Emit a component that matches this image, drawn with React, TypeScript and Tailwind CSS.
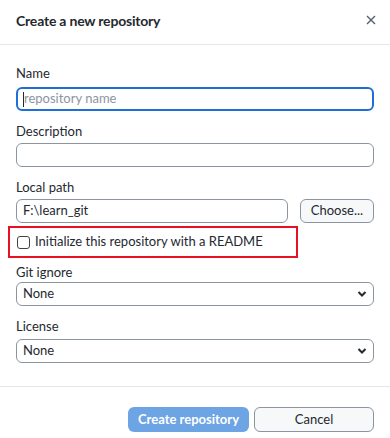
import React from "react";

const font = { fontFamily: 'Lato, "Noto Sans", sans-serif' };

function Label({ children }: { children: React.ReactNode }) {
  return <div className="h-5 text-[13px] leading-5 text-[#24292f]">{children}</div>;
}

function Box({ children, className = "" }: { children?: React.ReactNode; className?: string }) {
  return (
    <div
      className={
        "h-6 flex items-center rounded-[6px] border border-[#8c959f] px-[6px] text-[13px] text-[#24292f] " +
        className
      }
    >
      {children}
    </div>
  );
}

function Chevron() {
  return (
    <svg width="10" height="8" viewBox="0 0 10 8" className="ml-auto">
      <path d="M1.5 2 L5 5.5 L8.5 2" fill="none" stroke="#24292f" strokeWidth="2" />
    </svg>
  );
}

export default function App() {
  return (
    <div className="w-[390px] h-[438px] bg-white" style={font}>
      {/* Header */}
      <div className="h-[45px] flex items-center justify-between px-4 border-b border-[#e5e7ea]">
        <h1 className="text-[14px] font-bold tracking-[-0.2px] text-[#24292f] -mt-[3px]">
          Create a new repository
        </h1>
        <svg width="10" height="10" viewBox="0 0 10 10" className="mr-[-2px] -mt-[4px]">
          <path d="M1 1 L9 9 M9 1 L1 9" stroke="#57606a" strokeWidth="1.4" />
        </svg>
      </div>

      {/* Body */}
      <div className="px-4 pt-[18px] flex flex-col">
        <Label>Name</Label>
        <div className="mt-1 h-6 flex items-center rounded-[6px] border-2 border-[#1f6fd6] px-[5px] text-[13px]">
          <span className="w-px h-[15px] bg-[#24292f]" />
          <span className="text-[#8c959f]">repository name</span>
        </div>

        <div className="mt-[10px]">
          <Label>Description</Label>
        </div>
        <Box className="mt-[2px]" />

        <div className="mt-[10px]">
          <Label>Local path</Label>
        </div>
        <div className="mt-[2px] flex gap-3">
          <Box className="flex-1">F:\learn_git</Box>
          <button className="h-6 w-[74px] rounded-[6px] border border-[#8c959f] bg-[#f6f8fa] text-[13px] text-[#24292f]">
            Choose...
          </button>
        </div>

        <div className="-ml-2 mt-[3px] w-[290px] h-[32px] border-2 border-[#e81123] flex items-center pl-[7px] gap-[5px]">
          <span className="w-[13px] h-[13px] rounded-[3px] border border-[#444]" />
          <span className="text-[13px] text-[#24292f]">Initialize this repository with a README</span>
        </div>

        <div className="mt-1">
          <Label>Git ignore</Label>
        </div>
        <Box>
          None
          <Chevron />
        </Box>

        <div className="mt-[10px]">
          <Label>License</Label>
        </div>
        <Box className="mt-[3px]">
          None
          <Chevron />
        </Box>
      </div>

      {/* Footer */}
      <div className="mt-[23px] border-t border-[#e5e7ea] px-4 pt-[20px] flex justify-end gap-[5px]">
        <button className="h-[25px] w-[121px] rounded-[6px] bg-[#6ca4e4] text-[13px] font-bold text-white">
          Create repository
        </button>
        <button className="h-[25px] w-[120px] rounded-[6px] border border-[#8c959f] bg-[#f6f8fa] text-[13px] text-[#24292f]">
          Cancel
        </button>
      </div>
    </div>
  );
}
